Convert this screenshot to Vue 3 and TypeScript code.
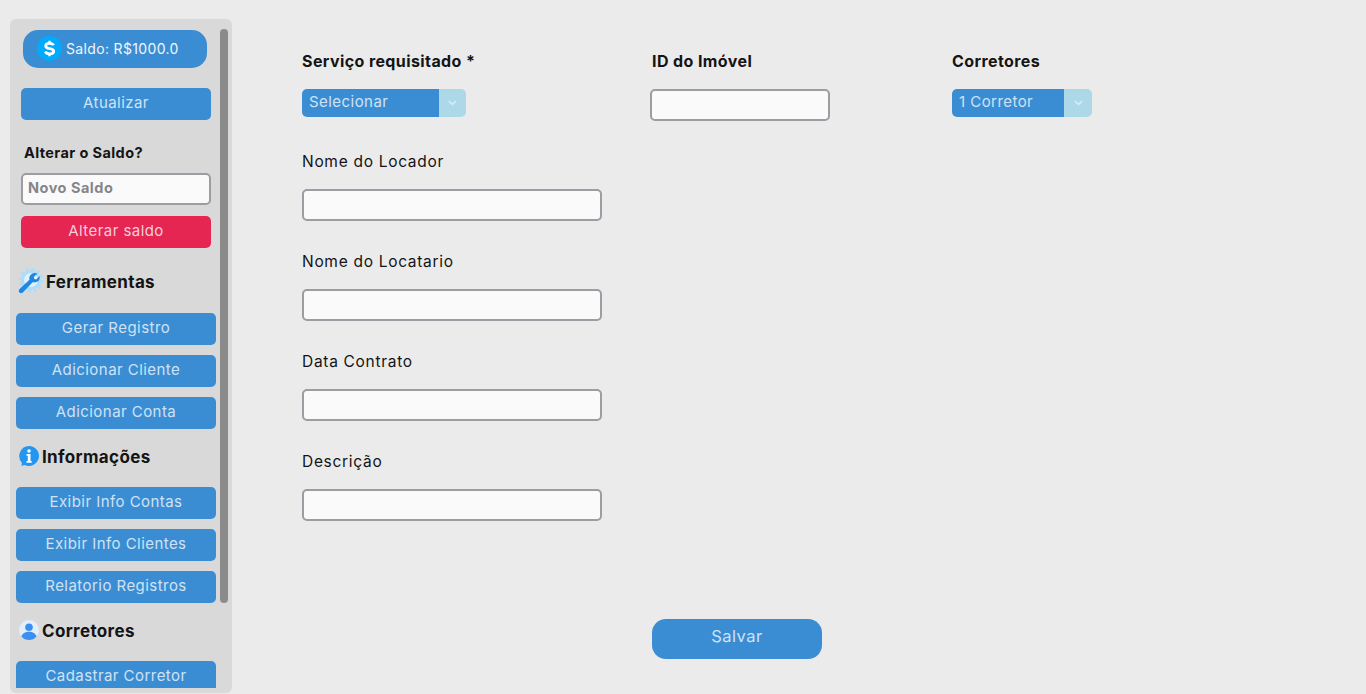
<script setup lang="ts">
import { ref } from 'vue'

const ferramentas = ['Gerar Registro', 'Adicionar Cliente', 'Adicionar Conta']
const informacoes = ['Exibir Info Contas', 'Exibir Info Clientes', 'Relatorio Registros']

// campos da coluna da esquerda
const campos = ['Nome do Locador', 'Nome do Locatario', 'Data Contrato', 'Descrição']

const novoSaldo = ref('')
const idImovel = ref('')
</script>

<template>
  <div class="page">
    <aside class="side">
      <div class="scroll">
        <div class="saldo">
          <svg class="saldo-icon" viewBox="0 0 25 25">
            <circle cx="12.5" cy="12.5" r="12.5" fill="#00aaff" />
            <path
              d="M16.5 9.300c-.5-1.300-2-2-4-2-2.300 0-3.800 1-3.800 2.600 0 3.700 8 1.800 8 5.300 0 1.600-1.700 2.600-4 2.600-2.200 0-3.800-.8-4.300-2.300"
              fill="none"
              stroke="#fff"
              stroke-width="2.800"
            />
            <path d="M12.500 4.800v2.600M12.500 17.600v2.600" fill="none" stroke="#fff" stroke-width="2.400" />
          </svg>
          <span>Saldo: R$1000.0</span>
        </div>
        <button class="btn narrow atualizar">Atualizar</button>

        <p class="alterar">Alterar o Saldo?</p>
        <input v-model="novoSaldo" class="campo novo" placeholder="Novo Saldo" />
        <button class="btn narrow vermelho">Alterar saldo</button>

        <h3 class="titulo ferr">
          <svg class="ic-ferr" viewBox="0 0 26 26">
            <circle cx="14" cy="12" r="10" fill="#aedcfa" />
            <circle cx="14" cy="12" r="11.200" fill="none" stroke="#aedcfa" stroke-width="2.400" stroke-dasharray="3 2.860" />
            <circle cx="14" cy="12" r="7" fill="#dff1fc" />
            <path
              d="M20.500 5.500l-3.700 3.400.4 2 2 .5 3.400-3.500c.5 2.500-.2 4.500-2 5.700-1.500 1-3.300 1-4.700.4L5.800 24.500c-1 .9-2.500.9-3.400-.1-.9-1-.8-2.400.2-3.300l9.900-9.300c-.5-1.700-.2-3.600 1.200-5 1.800-1.800 4.300-2.300 6.800-1.300z"
              fill="#1c87e6"
            />
          </svg>
          <span>Ferramentas</span>
        </h3>
        <div class="lista">
          <button v-for="f in ferramentas" :key="f" class="btn">{{ f }}</button>
        </div>

        <h3 class="titulo">
          <svg class="ic" viewBox="0 0 20 20">
            <path
              d="M10 0a10 10 0 1 1-4.600 18.900L2.500 20l.4-3.300A10 10 0 0 1 10 0z"
              fill="#2196f3"
            />
            <circle cx="10" cy="5" r="1.800" fill="#fff" />
            <path d="M7.500 8h4v7h1.200v1.800H7.500V15h1.300V9.800H7.500z" fill="#fff" />
          </svg>
          <span>Informações</span>
        </h3>
        <div class="lista">
          <button v-for="i in informacoes" :key="i" class="btn">{{ i }}</button>
        </div>

        <h3 class="titulo">
          <svg class="ic" viewBox="0 0 20 20">
            <circle cx="10" cy="10" r="10" fill="#e3eefc" />
            <circle cx="10" cy="7.300" r="3.800" fill="#3d8fef" />
            <path d="M2.400 16.500c.8-3 3.800-4.800 7.600-4.800s6.800 1.800 7.600 4.800A10 10 0 0 1 10 20a10 10 0 0 1-7.600-3.500z" fill="#3d8fef" />
          </svg>
          <span>Corretores</span>
        </h3>
        <div class="lista">
          <button class="btn">Cadastrar Corretor</button>
        </div>
      </div>
      <div class="thumb"></div>
    </aside>

    <form class="form" @submit.prevent>
      <div class="col-esq">
        <div class="servico">
          <label class="forte">Serviço requisitado *</label>
          <div class="sel larga">
            <select>
              <option>Selecionar</option>
            </select>
            <span class="seta">
              <svg viewBox="0 0 10 6" width="9" height="6">
                <path d="M1 1l4 3.500L9 1" fill="none" stroke="#d5ecf5" stroke-width="1.800" />
              </svg>
            </span>
          </div>
        </div>

        <div v-for="c in campos" :key="c" class="grupo">
          <label>{{ c }}</label>
          <input class="campo grande" />
        </div>
      </div>

      <div class="col-id">
        <label class="forte">ID do Imóvel</label>
        <input v-model="idImovel" class="campo id" />
      </div>

      <div class="col-cor">
        <label class="forte">Corretores</label>
        <div class="sel curta">
          <select>
            <option>1 Corretor</option>
          </select>
          <span class="seta">
            <svg viewBox="0 0 10 6" width="9" height="6">
              <path d="M1 1l4 3.500L9 1" fill="none" stroke="#d5ecf5" stroke-width="1.800" />
            </svg>
          </span>
        </div>
      </div>

      <button class="salvar" type="submit">Salvar</button>
    </form>
  </div>
</template>

<style>
body {
  background: #ebebeb;
}
</style>

<style scoped>
* {
  box-sizing: border-box;
}

.page {
  display: flex;
  align-items: flex-start;
  height: 694px;
  overflow: hidden;
  background: #ebebeb;
  color: #141414;
  font-family: Inter, "Liberation Sans", sans-serif;
}

/* barra lateral */
.side {
  position: relative;
  width: 222px;
  height: 674px;
  flex: none;
  margin: 19px 0 0 10px;
  padding: 10px 12px 5px 2px;
  background: #d9d9d9;
  border-radius: 6px;
}

.scroll {
  height: 659px;
  padding-top: 1px;
  overflow: hidden;
}

/* a barra de rolagem desenhada por cima da lateral */
.thumb {
  position: absolute;
  top: 10px;
  left: 210px;
  width: 8px;
  height: 574px;
  background: #8b8b8b;
  border-radius: 4px;
}

.saldo {
  display: flex;
  align-items: center;
  gap: 4px;
  width: 184px;
  height: 38px;
  margin-left: 11px;
  padding: 0 0 2px 14px;
  background: #3b8dd3;
  border-radius: 15px;
  color: #f1f6fb;
  font-size: 14px;
  letter-spacing: 0.35px;
}

.saldo-icon {
  width: 25px;
  height: 25px;
  flex: none;
}

.btn {
  display: block;
  width: 200px;
  height: 32px;
  margin: 0 0 0 4px;
  padding: 0 0 3px;
  border: none;
  border-radius: 5px;
  background: #3b8dd3;
  color: #cfe2f5;
  font-family: inherit;
  font-size: 15px;
  letter-spacing: 0.45px;
  cursor: pointer;
}

.narrow {
  width: 190px;
  margin-left: 9px;
}

.atualizar {
  margin-top: 20px;
}

.vermelho {
  margin-top: 11px;
  background: #e52552;
  color: #f6cdd8;
}

.alterar {
  margin: 23px 0 0 12px;
  font-size: 14.500px;
  line-height: 20px;
  font-weight: 700;
  letter-spacing: 0.4px;
}

.campo {
  display: block;
  height: 32px;
  padding: 0 5px;
  border: 2px solid #9b9da3;
  border-radius: 5px;
  background: #fafafa;
  font-family: inherit;
  outline: none;
}

.novo {
  width: 190px;
  margin: 10px 0 0 9px;
  padding-bottom: 3px;
  font-size: 14.500px;
  font-weight: 700;
  letter-spacing: 0.5px;
}

.novo::placeholder {
  color: #85858a;
  opacity: 1;
}

.titulo {
  display: flex;
  align-items: center;
  gap: 3px;
  height: 24px;
  margin: 15px 0 0 7px;
  font-size: 17px;
  font-weight: 700;
  letter-spacing: 0.35px;
}

.titulo span {
  padding-top: 1px;
}

.ferr {
  margin: 21px 0 0 5px;
  gap: 3px;
}

.ic {
  width: 20px;
  height: 20px;
  flex: none;
}

.ic-ferr {
  width: 26px;
  height: 26px;
  flex: none;
}

.lista {
  display: flex;
  flex-direction: column;
  gap: 10px;
  margin-top: 19px;
}

.ferr + .lista {
  margin-top: 20px;
}

/* formulario */
.form {
  display: grid;
  grid-template-columns: 348px 302px auto;
  grid-template-rows: auto auto;
  justify-content: start;
  margin: 51px 0 0 70px;
}

.col-esq {
  display: flex;
  flex-direction: column;
}

.servico {
  height: 100px;
}

.forte {
  display: block;
  height: 20px;
  font-size: 16px;
  line-height: 20px;
  font-weight: 700;
  letter-spacing: 0.4px;
}

.grupo {
  height: 100px;
}

.grupo label {
  display: block;
  height: 20px;
  padding-top: 1px;
  font-size: 15.500px;
  line-height: 20px;
  letter-spacing: 0.7px;
}

.grande {
  width: 300px;
  margin-top: 18px;
}

.col-id .forte {
  margin-left: 2px;
}

.id {
  width: 180px;
  margin-top: 18px;
}

.sel {
  display: flex;
  height: 28px;
  margin-top: 18px;
  border-radius: 5px;
  overflow: hidden;
}

.larga {
  width: 164px;
}

.curta {
  width: 140px;
}

.sel select {
  flex: 1;
  min-width: 0;
  height: 28px;
  padding: 0 0 4px 7px;
  border: none;
  border-radius: 0;
  appearance: none;
  background: #3b8dd3;
  color: #cfe2f5;
  font-family: inherit;
  font-size: 15px;
  letter-spacing: 0.45px;
  outline: none;
}

.seta {
  display: flex;
  align-items: center;
  justify-content: center;
  width: 27px;
  flex: none;
  background: #acd8e8;
}

.curta .seta {
  width: 28px;
}

.salvar {
  grid-column: 2;
  width: 170px;
  height: 40px;
  margin: 68px 0 0 2px;
  padding: 0 0 7px;
  border: none;
  border-radius: 14px;
  background: #3b8dd3;
  color: #cfe2f5;
  font-family: inherit;
  font-size: 16.500px;
  letter-spacing: 0.5px;
  cursor: pointer;
}
</style>
